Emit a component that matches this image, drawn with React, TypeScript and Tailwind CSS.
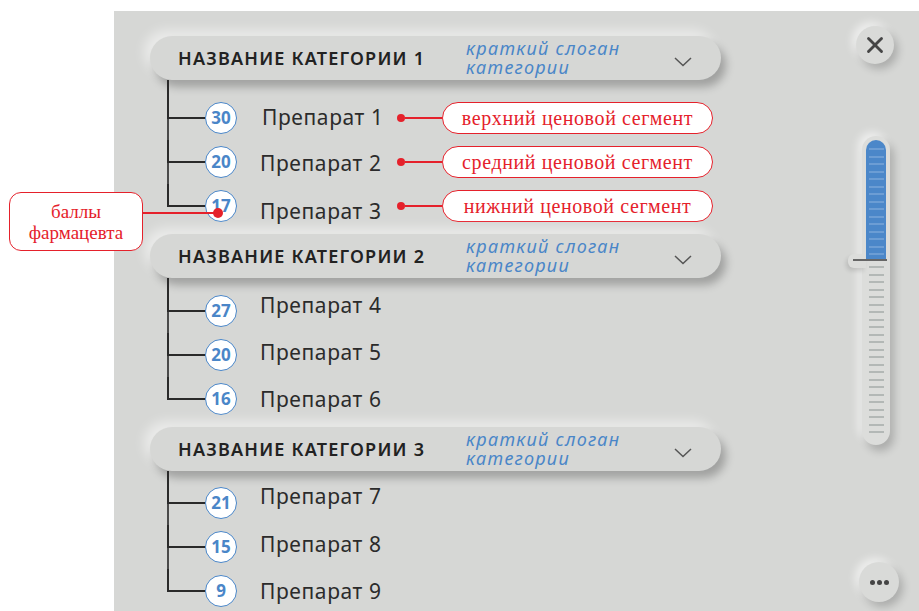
import React from "react";
import { X } from "lucide-react";

type Item = {
  score: number;
  name: string;
  shift: string;
  segment?: string;
};

type Category = {
  title: string;
  gap: string;
  items: Item[];
};

const categories: Category[] = [
  {
    title: "НАЗВАНИЕ КАТЕГОРИИ 1",
    gap: "h-4",
    items: [
      { score: 30, name: "Препарат 1", shift: "translate-x-[2px]", segment: "верхний ценовой сегмент" },
      { score: 20, name: "Препарат 2", shift: "translate-y-[2px]", segment: "средний ценовой сегмент" },
      { score: 17, name: "Препарат 3", shift: "translate-y-[6px]", segment: "нижний ценовой сегмент" },
    ],
  },
  {
    title: "НАЗВАНИЕ КАТЕГОРИИ 2",
    gap: "h-[11px]",
    items: [
      { score: 27, name: "Препарат 4", shift: "-translate-y-[5px]" },
      { score: 20, name: "Препарат 5", shift: "-translate-y-[2px]" },
      { score: 16, name: "Препарат 6", shift: "translate-y-[1px]" },
    ],
  },
  {
    title: "НАЗВАНИЕ КАТЕГОРИИ 3",
    gap: "h-[10px]",
    items: [
      { score: 21, name: "Препарат 7", shift: "-translate-y-[6px]" },
      { score: 15, name: "Препарат 8", shift: "-translate-y-[2px]" },
      { score: 9, name: "Препарат 9", shift: "translate-y-[1px]" },
    ],
  },
];

const sans = "font-['Noto_Sans',sans-serif]";
const serif = "font-['Liberation_Serif',serif]";

function CategoryHeader({ title }: { title: string }) {
  return (
    <div className="flex h-11 w-[571px] items-center rounded-full bg-[#d6d7d5] pl-7 pr-7 shadow-[5px_7px_9px_rgba(0,0,0,0.25),-6px_-6px_12px_rgba(255,255,255,0.5)]">
      <div className={`w-[288px] text-[18px] font-semibold tracking-[1.2px] text-[#222] ${sans}`}>
        {title}
      </div>
      <div className={`text-[18px] italic leading-[19px] tracking-[1.3px] text-[#4a86c8] ${sans}`}>
        краткий слоган
        <br />
        категории
      </div>
      <svg className="ml-auto mr-[1px] mt-2" width="18" height="10" viewBox="0 0 18 10">
        <polyline points="1,1 9,8.5 17,1" fill="none" stroke="#555" strokeWidth="1.5" />
      </svg>
    </div>
  );
}

function Row({ item, last }: { item: Item; last: boolean }) {
  return (
    <div className="flex h-11 items-center">
      <div className="flex h-full w-[38px] flex-col">
        <div className="h-[23px] border-b-2 border-l-2 border-[#2a2a2a]" />
        {!last && <div className="flex-1 border-l-2 border-[#4a4a4a]" />}
      </div>
      <div
        className={`flex h-8 w-8 items-center justify-center rounded-full border-[1.5px] border-[#4a86c8] bg-white text-[17px] font-bold text-[#4a86c8] ${sans}`}
      >
        {item.score}
      </div>
      <span className={`ml-[23px] w-[137px] text-[21px] tracking-[0.6px] text-[#2b2b2b] ${sans} ${item.shift}`}>
        {item.name}
      </span>
      {item.segment && (
        <>
          <div className="h-2 w-2 rounded-full bg-[#e5212b]" />
          <div className="h-[2px] w-[37px] bg-[#e5212b]" />
          <div
            className={`flex h-8 w-[271px] items-center justify-center rounded-full border-[1.5px] border-[#e5212b] bg-white text-[20px] tracking-[0.6px] text-[#e5212b] ${serif}`}
          >
            {item.segment}
          </div>
        </>
      )}
    </div>
  );
}

function Slider() {
  const blueTicks = Array.from({ length: 15 });
  const grayTicks = Array.from({ length: 23 });
  return (
    <div className="relative mr-[9px] mt-[72px] flex h-[309px] w-7 flex-col self-end rounded-full bg-[#dcdddb] p-1 shadow-[4px_6px_8px_rgba(0,0,0,0.2),-4px_-4px_8px_rgba(255,255,255,0.6)]">
      <div className="flex h-[120px] flex-col items-center gap-[5.5px] rounded-t-full bg-[#4b87c9] pt-[8px]">
        {blueTicks.map((_, i) => (
          <div key={i} className="h-[2px] w-[15px] bg-[#6c9dd4]" />
        ))}
      </div>
      <div className="flex flex-col items-center gap-[5.5px] pt-[6px]">
        {grayTicks.map((_, i) => (
          <div key={i} className="h-[2px] w-[15px] bg-[#b3b8b6]" />
        ))}
      </div>
      {/* thumb */}
      <div className="absolute left-[-14px] top-[118px] h-[14px] w-[18px] rounded-l-md bg-[#dcdddb] shadow-[-2px_3px_4px_rgba(0,0,0,0.12)]" />
      <div className="absolute left-[-9px] top-[123px] h-[2px] w-[34px] bg-[#666]" />
    </div>
  );
}

export default function App() {
  return (
    <div className="relative h-[611px] w-[919px] overflow-hidden bg-white pl-[114px] pt-[11px]">
      <div className="flex h-[600px] bg-[#d6d7d5]">
        <div className="flex flex-col gap-[6px] pl-9 pt-[25px]">
          {categories.map((cat) => (
            <div key={cat.title}>
              <CategoryHeader title={cat.title} />
              <div className={`ml-[17px] w-[2px] bg-[#2a2a2a] ${cat.gap}`} />
              <div className="ml-[17px]">
                {cat.items.map((item, i) => (
                  <Row key={item.name} item={item} last={i === cat.items.length - 1} />
                ))}
              </div>
            </div>
          ))}
        </div>

        <div className="ml-auto mr-5 flex w-[52px] flex-col pt-[15px]">
          <button className="mr-[5px] flex h-[38px] w-[38px] items-center justify-center self-end rounded-full bg-[#d9dad8] shadow-[4px_5px_8px_rgba(0,0,0,0.2),-4px_-4px_8px_rgba(255,255,255,0.6)]">
            <X size={26} strokeWidth={2.6} color="#454545" />
          </button>
          <Slider />
          <button className="mt-[117px] flex h-10 w-10 items-center justify-center gap-[2px] self-end rounded-full bg-[#d9dad8] shadow-[4px_5px_8px_rgba(0,0,0,0.2),-4px_-4px_8px_rgba(255,255,255,0.6)]">
            <span className="h-[5px] w-[5px] rounded-full bg-[#444]" />
            <span className="h-[5px] w-[5px] rounded-full bg-[#444]" />
            <span className="h-[5px] w-[5px] rounded-full bg-[#444]" />
          </button>
        </div>
      </div>

      {/* pharmacist score callout */}
      <div
        className={`absolute left-[9px] top-[192px] flex h-[59px] w-[134px] items-center justify-center rounded-[12px] border-[1.5px] border-[#e5212b] bg-white text-center text-[19px] leading-[21px] text-[#e5212b] ${serif}`}
      >
        баллы
        <br />
        фармацевта
      </div>
      <div className="absolute left-[143px] top-[212px] h-[2px] w-[72px] bg-[#e5212b]" />
      <div className="absolute left-[213px] top-[208px] h-[10px] w-[10px] rounded-full bg-[#e5212b]" />
    </div>
  );
}
